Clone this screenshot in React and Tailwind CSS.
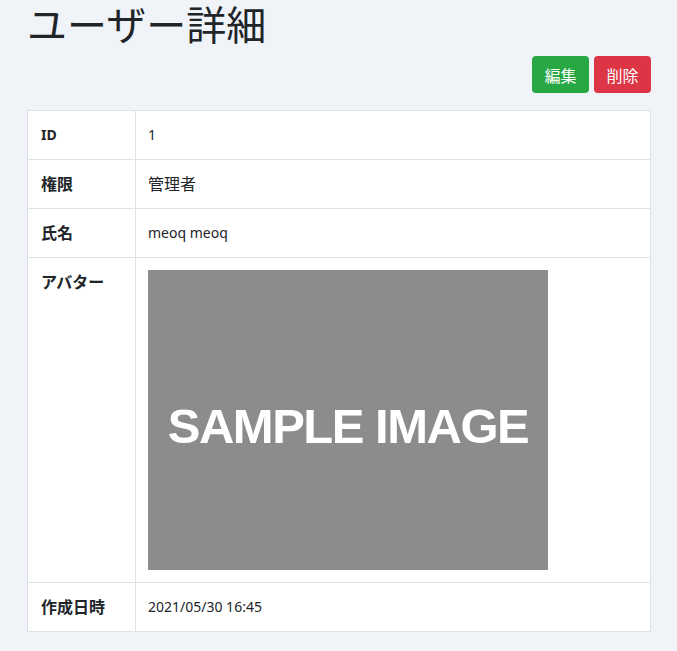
const rows = [
  { label: "ID", value: "1", labelSize: "text-[14px]", valueSize: "text-[14px]" },
  { label: "権限", value: "管理者", labelSize: "text-[16px]", valueSize: "text-[16px]" },
  { label: "氏名", value: "meoq meoq", labelSize: "text-[16px]", valueSize: "text-[14px]" },
];

const cjk = { fontFamily: '"Noto Sans CJK JP", sans-serif' };

function Label({ size, children }) {
  return (
    <th className={`w-[108px] border border-[#dee2e6] px-[13px] py-3 text-left align-top leading-[24px] font-bold ${size}`}>
      {children}
    </th>
  );
}

export default function App() {
  return (
    <div
      className="min-h-screen bg-[#f0f4f8] pl-[27px] pr-[26px] text-[#212529]"
      style={{ fontFamily: '"Noto Sans", "Noto Sans CJK JP", sans-serif' }}
    >
      <h1 className="-mt-[1px] text-[40px] leading-[48px] font-normal" style={cjk}>
        ユーザー詳細
      </h1>

      <div className="mt-[9px] mb-[17px] flex justify-end gap-[5px]">
        <button
          type="button"
          className="h-[37px] w-[57px] rounded-[4px] bg-[#28a745] text-[16px] text-white"
          style={cjk}
        >
          編集
        </button>
        <button
          type="button"
          className="h-[37px] w-[57px] rounded-[4px] bg-[#dc3545] text-[16px] text-white"
          style={cjk}
        >
          削除
        </button>
      </div>

      <table className="w-full border-collapse bg-white">
        <tbody>
          {rows.map((r) => (
            <tr key={r.label}>
              <Label size={r.labelSize}>{r.label}</Label>
              <td className={`border border-[#dee2e6] px-3 py-3 leading-[24px] ${r.valueSize}`}>
                {r.value}
              </td>
            </tr>
          ))}
          <tr>
            <Label size="text-[16px]">アバター</Label>
            <td className="border border-[#dee2e6] px-3 py-3 text-[14px] leading-[24px]">
              <div className="flex h-[300px] w-[400px] items-center justify-center bg-[#8c8c8c] pt-[12px]">
                <span
                  className="text-[49px] leading-none font-bold tracking-[-1.5px] text-white"
                  style={{ fontFamily: '"Liberation Sans", Arial, sans-serif' }}
                >
                  SAMPLE IMAGE
                </span>
              </div>
            </td>
          </tr>
          <tr>
            <Label size="text-[16px]">作成日時</Label>
            <td className="border border-[#dee2e6] px-3 py-3 text-[14px] leading-[24px]">
              2021/05/30 16:45
            </td>
          </tr>
        </tbody>
      </table>
      <div className="h-[20px]" />
    </div>
  );
}
